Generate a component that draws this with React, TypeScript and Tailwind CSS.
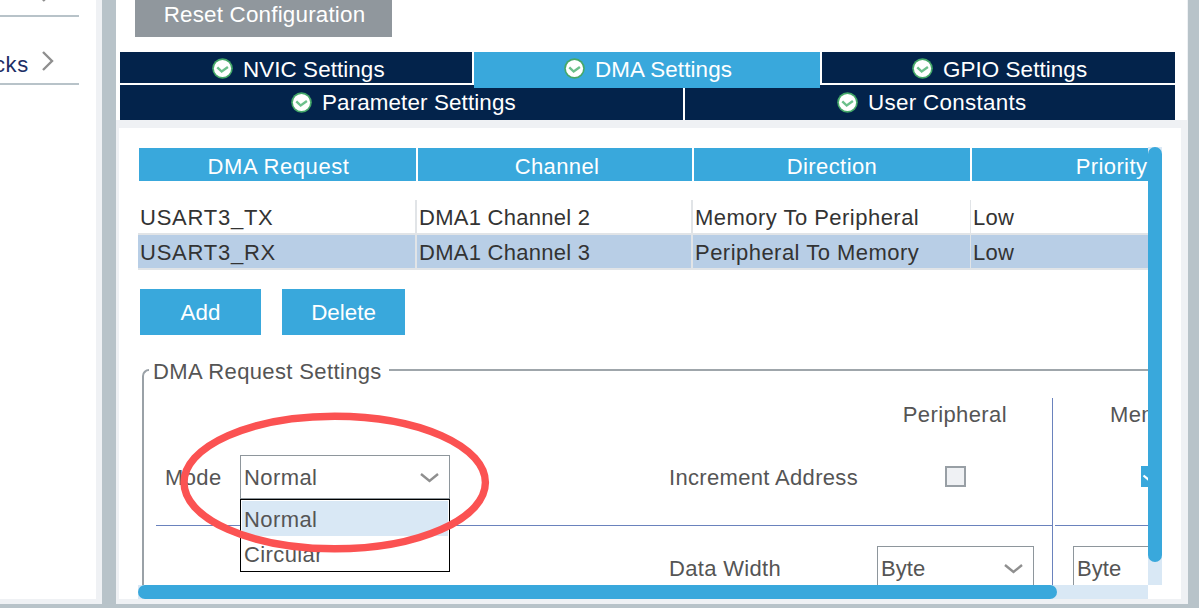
import React from "react";
import clsx from "clsx";

interface TabProps {
  label: string;
  className?: string;
}

interface SelectProps {
  value: string;
  className?: string;
  children?: React.ReactNode;
}

const COLUMNS = [
  { label: "DMA Request", width: "w-[277px] pl-0.5 tracking-[0.55px]" },
  { label: "Channel", width: "w-[274px] pl-1 tracking-[0.35px]" },
  { label: "Direction", width: "w-[276px] tracking-[0.4px]" },
  { label: "Priority", width: "w-[277px] pl-0.5 tracking-[0.4px]" },
];

const REQUESTS = [
  { request: "USART3_TX", channel: "DMA1 Channel 2", direction: "Memory To Peripheral", priority: "Low", selected: false },
  { request: "USART3_RX", channel: "DMA1 Channel 3", direction: "Peripheral To Memory", priority: "Low", selected: true },
];

const MODES = ["Normal", "Circular"];

function CheckBadge() {
  return (
    <svg width="21" height="21" viewBox="0 0 21 21" className="shrink-0" aria-hidden>
      <circle cx="10.5" cy="10.5" r="10.3" fill="#45a869" />
      <circle cx="10.5" cy="10.5" r="8.6" fill="#fff" />
      <path d="M5.3 9.3l4.4 4.2 6.2-4.4" fill="none" stroke="#6cc08b" strokeWidth="2.4" />
    </svg>
  );
}

function ChevronDown() {
  return (
    <svg width="19" height="11" viewBox="0 0 19 11" className="shrink-0" aria-hidden>
      <path d="M1 2l8.5 7L18 2" fill="none" stroke="#8f8f8f" strokeWidth="2.4" />
    </svg>
  );
}

function ChevronRight({ className }: { className?: string }) {
  return (
    <svg width="12" height="20" viewBox="0 0 12 20" className={clsx("shrink-0", className)} aria-hidden>
      <path d="M1 1l9 9-9 9" fill="none" stroke="#8f8f8f" strokeWidth="2.4" />
    </svg>
  );
}

function Tab({ label, className }: TabProps) {
  return (
    <button
      type="button"
      className={clsx("flex shrink-0 items-start text-[22.4px] text-white", className)}
    >
      <CheckBadge />
      <span className="-mt-1.5 ml-[10px] whitespace-nowrap">{label}</span>
    </button>
  );
}

function Select({ value, className, children }: SelectProps) {
  return (
    <div
      className={clsx(
        "relative flex h-11 shrink-0 items-center justify-between border border-[#8e969c] bg-white pl-[3px] pr-[10px]",
        className
      )}
    >
      <span>{value}</span>
      <ChevronDown />
      {children}
    </div>
  );
}

function Sidebar() {
  return (
    <aside className="h-[604px] w-[102px] shrink-0 border-b-[5px] border-r-[6px] border-[#eff1f4] bg-white">
      <div className="flex h-[17px] w-[79px] items-start overflow-hidden border-b-2 border-[#b8c3c9] pl-[42px]">
        <ChevronRight className="-mt-[18px]" />
      </div>
      <div className="flex h-[68px] w-[79px] items-start border-b-2 border-[#b8c3c9] pt-[34px]">
        <div className="flex w-[29px] justify-end overflow-hidden text-[22px] leading-[28px] tracking-[0.7px] text-[#1d2f66]">
          cks
        </div>
        <ChevronRight className="ml-[13px]" />
      </div>
    </aside>
  );
}

function RequestTable() {
  return (
    <div className="w-[1112px]">
      <div className="flex gap-0.5 pl-px pt-px">
        {COLUMNS.map((c) => (
          <div
            key={c.label}
            className={clsx("h-[33px] shrink-0 bg-[#39a8dc] text-center leading-[37px] text-white", c.width)}
          >
            {c.label}
          </div>
        ))}
      </div>
      <div className="pt-[19px] text-[#333]">
        {REQUESTS.map((r) => (
          <div
            key={r.request}
            className={clsx(
              "flex h-[35px] border-b-2 border-[#e1e4e7] leading-[35px]",
              r.selected && "bg-[#b8cee6]"
            )}
          >
            <div className="w-[279px] shrink-0 border-r-2 border-[#e1e4e7] pl-0.5 tracking-[0.75px]">{r.request}</div>
            <div className="w-[276px] shrink-0 border-r-2 border-[#e1e4e7] pl-0.5 tracking-[0.27px]">{r.channel}</div>
            <div className="w-[278px] shrink-0 border-r border-[#e1e4e7] pl-0.5 tracking-[0.47px]">{r.direction}</div>
            <div className="pl-0.5 tracking-[0.3px]">{r.priority}</div>
          </div>
        ))}
      </div>
    </div>
  );
}

function ModeMenu() {
  return (
    <ul className="absolute -left-px top-[43px] z-10 h-[73px] w-[210px] border border-black bg-white p-px">
      {MODES.map((m, i) => (
        <li key={m} className={clsx("h-[35px] pl-0.5 leading-[37px]", i === 0 && "bg-[#d9e8f5]")}>
          {m}
        </li>
      ))}
    </ul>
  );
}

function RequestSettings() {
  return (
    <section className="ml-1 mt-[23px] w-[1112px] text-[#555]">
      <div className="flex h-[29px]">
        <div className="mt-[11px] h-[18px] w-[7px] shrink-0 rounded-tl-[8px] border-l-2 border-t-2 border-[#9aa1a7]" />
        <h2 className="ml-1 shrink-0 leading-[27px] tracking-[0.37px]">DMA Request Settings</h2>
        <div className="ml-[7px] mt-[11px] h-0.5 grow bg-[#9fa6ab]" />
      </div>
      <div className="flex border-l-2 border-[#9aa1a7] pl-3 tracking-[0.4px]">
        <div className="mt-[11px] h-[190px] w-[897px] shrink-0 border-r border-[#6a82bd]">
          <div className="flex h-8 justify-end pr-[45px] leading-[34px]">Peripheral</div>
          <div className="flex h-24 border-b border-[#6a82bd] pl-[9px] pt-[25px]">
            <span className="w-[75px] shrink-0 leading-[46px]">Mode</span>
            <Select value="Normal" className="w-[210px]">
              <ModeMenu />
            </Select>
            <span className="ml-[219px] w-[276px] shrink-0 leading-[46px] tracking-[0.33px]">Increment Address</span>
            <span className="mt-[11px] size-[21px] shrink-0 border-2 border-[#989fa5] bg-[#eff1f4]" />
          </div>
          <div className="flex pl-[513px] pt-5">
            <span className="w-52 shrink-0 leading-[46px] tracking-[0.33px]">Data Width</span>
            <Select value="Byte" className="w-[157px] tracking-[0.1px]" />
          </div>
        </div>
        <div className="mt-[11px] w-[200px] shrink-0 pl-0.5">
          <div className="h-8 pl-[55px] leading-[34px]">Memory</div>
          <div className="h-24 border-b border-[#6a82bd] pl-[86px] pt-9">
            <svg width="21" height="21" viewBox="0 0 21 21" aria-hidden>
              <path d="M0 0h21v21H0z" fill="#39a8dc" />
              <path d="M2.5 9.5l6 5 9-8" fill="none" stroke="#fff" strokeWidth="2.2" />
            </svg>
          </div>
          <div className="pl-[18px] pt-5">
            <Select value="Byte" className="w-[157px] tracking-[0.1px]" />
          </div>
        </div>
      </div>
    </section>
  );
}

export default function App() {
  return (
    <div className="relative h-[616px] w-[1199px] overflow-hidden bg-white font-['Liberation_Sans',Arial,sans-serif] text-[22px]">
      <div className="flex h-[608px] bg-[#b8c3c9]">
        <Sidebar />
        <main className="ml-[14px] h-[604px] w-[1072px] shrink-0 bg-[#eff1f4]">
          <div className="h-[120px] border-r border-[#eff1f4] bg-white pl-1">
            <button
              type="button"
              className="ml-[15px] block h-[37px] w-[257px] bg-[#90979d] pb-[7px] pl-0.5 text-[22.4px] leading-[30px] tracking-[0.2px] text-white"
            >
              Reset Configuration
            </button>
            <nav className="flex w-[1055px] flex-col gap-0.5 pt-[15px]">
              <div className="flex h-[31px] gap-0.5">
                <Tab label="NVIC Settings" className="h-[31px] w-[352px] bg-[#03234b] pl-[92px] pt-1.5 leading-9 tracking-[0.08px]" />
                <Tab label="DMA Settings" className="z-10 h-9 w-[346px] bg-[#39a8dc] pl-[90px] pt-1.5 leading-9 tracking-[0.12px]" />
                <Tab label="GPIO Settings" className="h-[31px] w-[353px] bg-[#03234b] pl-[90px] pt-1.5 leading-9 tracking-[0.08px]" />
              </div>
              <div className="flex h-[35px] gap-0.5">
                <Tab label="Parameter Settings" className="h-[35px] w-[563px] bg-[#03234b] pl-[171px] pt-[7px] leading-[34px] tracking-[0.12px]" />
                <Tab label="User Constants" className="h-[35px] w-[490px] bg-[#03234b] pl-[152px] pt-[7px] leading-[34px] tracking-[0.3px]" />
              </div>
            </nav>
          </div>

          <div className="ml-[3px] mt-2 h-[471px] w-[1062px] bg-white pl-[19px] pt-[19px]">
            <div className="flex">
              <div className="h-[438px] w-[1010px] shrink-0 overflow-hidden whitespace-nowrap">
                <RequestTable />
                <div className="flex gap-[21px] pl-0.5 pt-[19px] text-[22.4px] leading-[48px] text-white">
                  <button type="button" className="h-[46px] w-[121px] bg-[#39a8dc]">Add</button>
                  <button type="button" className="h-[46px] w-[123px] bg-[#39a8dc]">Delete</button>
                </div>
                <RequestSettings />
              </div>
              <div className="h-[438px] w-[14px] bg-[#d9e8f5]">
                <div className="h-[415px] rounded-[7px] bg-[#39a8dc]" />
              </div>
            </div>
            <div className="h-[14px] w-[1010px] bg-[#d9e8f5]">
              <div className="h-[14px] w-[919px] rounded-[7px] bg-[#39a8dc]" />
            </div>
          </div>
        </main>
      </div>

      {/* hand-drawn marker around the mode dropdown */}
      <svg width="310" height="142" viewBox="0 0 310 142" className="absolute left-[180px] top-[411px] z-20" aria-hidden>
        <ellipse cx="154.7" cy="71.5" rx="150.7" ry="66.3" fill="none" stroke="#fb5252" strokeWidth="7.4" />
      </svg>
    </div>
  );
}
